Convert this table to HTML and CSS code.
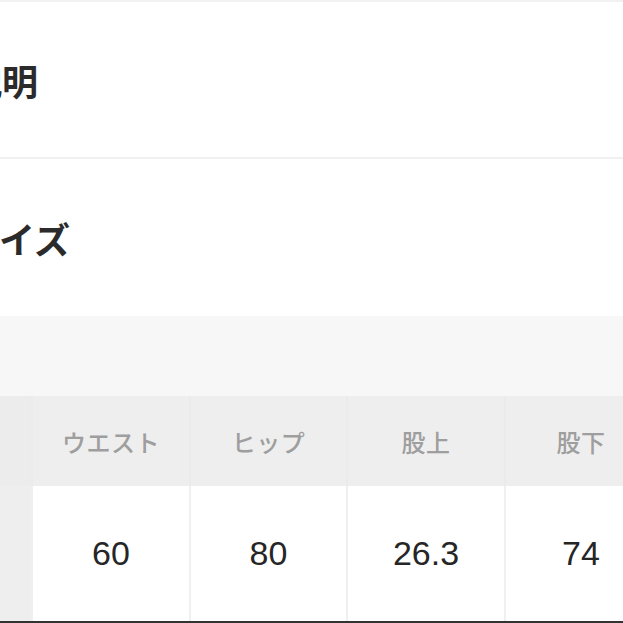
FILE: index.html
```html
<!DOCTYPE html>
<html lang="ja">
<head>
<meta charset="utf-8">
<link rel="stylesheet" href="styles.css">
</head>
<body>
<div class="page">
  <div class="topbar"></div>
  <section class="section section-desc">
    <h2 class="heading heading-desc">商品の説明</h2>
  </section>
  <div class="divider"></div>
  <section class="section section-size">
    <h2 class="heading heading-size">サイズ</h2>
  </section>
  <div class="band"></div>
  <div class="table">
    <div class="row row-head">
      <div class="cell cell-side"></div>
      <div class="cell">ウエスト</div>
      <div class="cell">ヒップ</div>
      <div class="cell">股上</div>
      <div class="cell">股下</div>
    </div>
    <div class="row row-body">
      <div class="cell cell-side"></div>
      <div class="cell">60</div>
      <div class="cell">80</div>
      <div class="cell">26.3</div>
      <div class="cell">74</div>
    </div>
  </div>
  <div class="bottombar"></div>
</div>
</body>
</html>
```

FILE: styles.css
```css
html, body {
  margin: 0;
  padding: 0;
  background: #ffffff;
}
body {
  width: 623px;
  height: 623px;
  overflow: hidden;
  font-family: "Noto Sans CJK JP", "Noto Sans", sans-serif;
}
.page {
  width: 623px;
  height: 623px;
  overflow: hidden;
  display: flex;
  flex-direction: column;
}
.topbar {
  height: 2px;
  background: #f1f1f1;
  flex: none;
}
.section {
  display: flex;
  align-items: center;
  flex: none;
  background: #ffffff;
}
.section-desc { height: 155px; }
.section-size { height: 157px; }
.heading {
  margin: 0;
  font-size: 36px;
  font-weight: 700;
  color: #2b2b2b;
  white-space: nowrap;
  line-height: 1;
}
.heading-desc { margin-left: -142px; }
.heading-size { margin-left: -37px; }
.divider {
  height: 2px;
  background: #f0f0f0;
  flex: none;
}
.band {
  height: 80px;
  background: #f7f7f7;
  flex: none;
}
.table {
  flex: none;
  display: flex;
  flex-direction: column;
}
.row {
  display: grid;
  grid-template-columns: 31px 156px 155px 156px 150px;
  column-gap: 2px;
}
.row-head {
  height: 90px;
  background: #ebebeb;
}
.row-head .cell {
  background: #eeeeee;
  color: #9e9e9e;
  font-size: 24px;
  font-weight: 500;
  letter-spacing: 0.5px;
}
.row-head .cell-side {
  background: #ececec;
}
.row-body {
  height: 135px;
  background: #f0f0f0;
}
.row-body .cell {
  background: #ffffff;
  color: #262626;
  font-family: "Liberation Sans", Arial, sans-serif;
  font-size: 34px;
}
.row-body .cell-side {
  background: #eeeeee;
}
.cell {
  display: flex;
  align-items: center;
  justify-content: center;
  white-space: nowrap;
}
.bottombar {
  height: 2px;
  background: #333333;
  flex: none;
}
```
